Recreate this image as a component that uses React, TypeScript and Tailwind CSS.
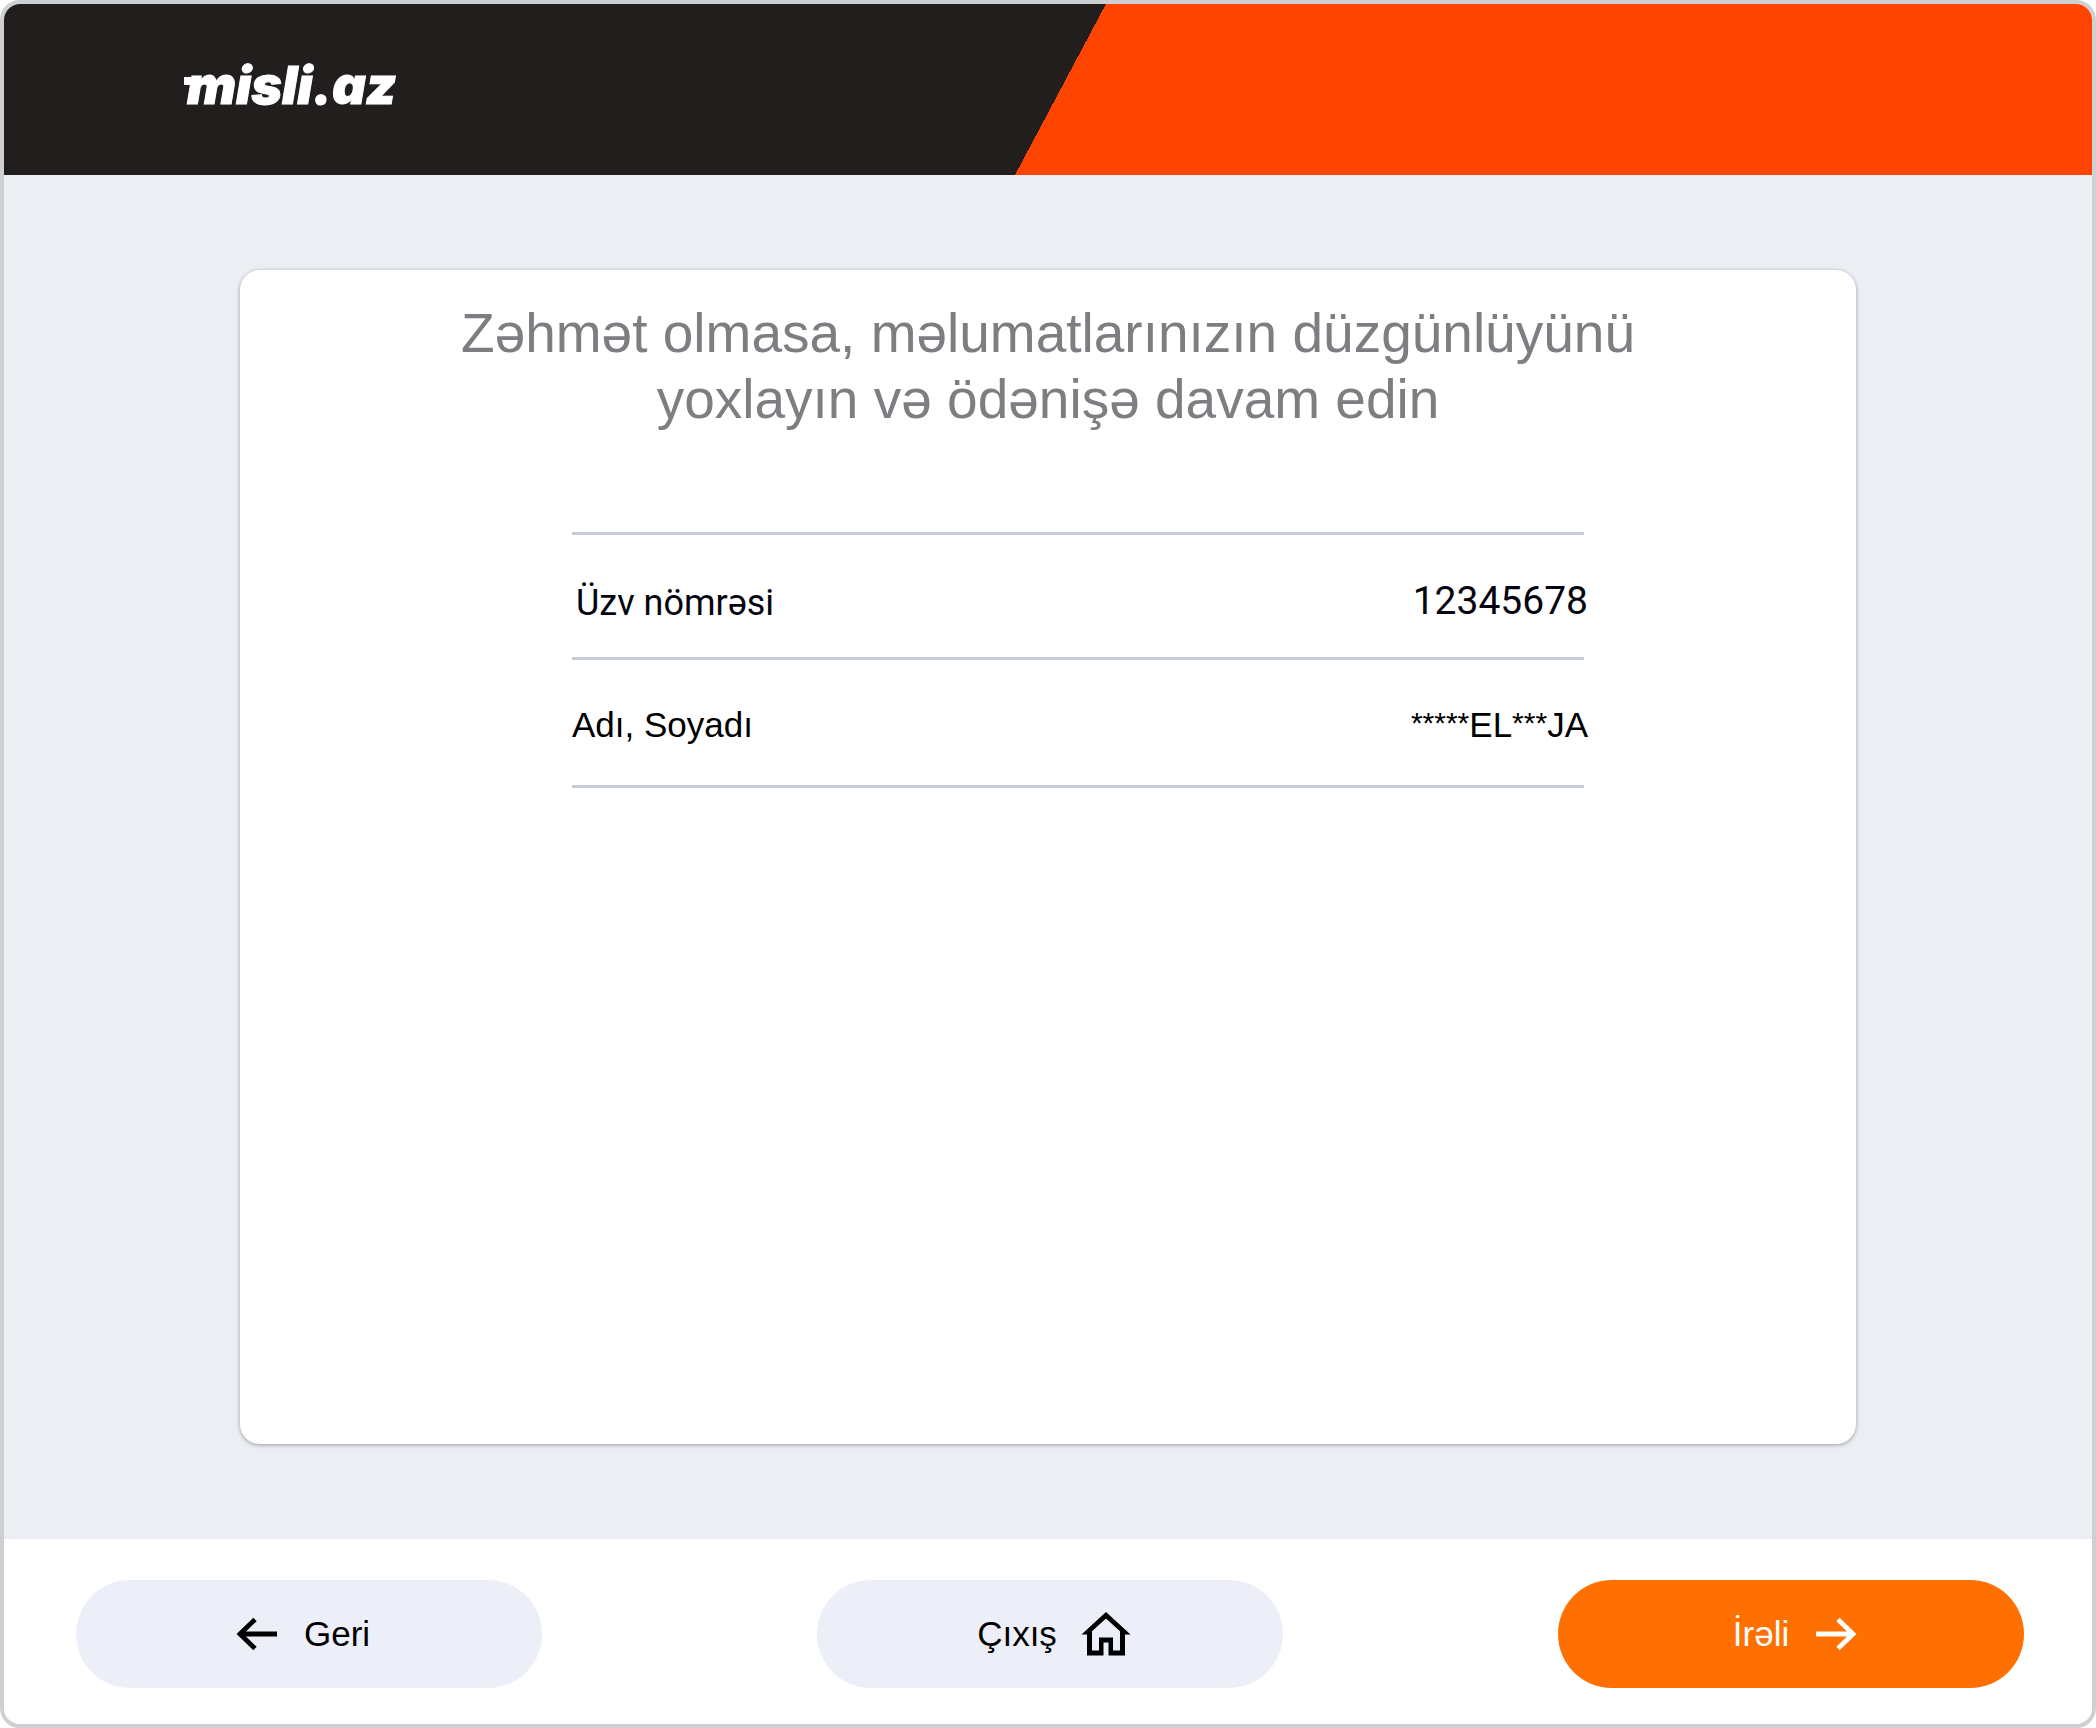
import type { ReactNode } from "react";
import { clsx } from "clsx";

function ArrowIcon({ className }: { className?: string }) {
  return (
    <svg
      width="42"
      height="34"
      viewBox="0 0 42 34"
      fill="none"
      stroke="currentColor"
      strokeWidth="4.8"
      className={className}
      aria-hidden="true"
    >
      <path d="M41 17H4" />
      <path d="M19 2.5 4 17l15 14.5" />
    </svg>
  );
}

function HomeIcon() {
  return (
    <svg width="50" height="44" viewBox="0 0 50 44" fill="currentColor" aria-hidden="true">
      <path
        fillRule="evenodd"
        d="M25 0 0.5 22.5H6V43.5H22.5V30.5H27.5V43.5H44V22.5H49.5L25 0ZM25 6.5 39 19.2V38.5H32V25.5H18V38.5H11V19.2L25 6.5Z"
      />
    </svg>
  );
}

function Logo() {
  return (
    <a
      href="#"
      className="relative font-[Inter,sans-serif] text-[52px] leading-[60px] font-black text-white italic [-webkit-text-stroke:1px_white] [font-feature-settings:'cv11']"
    >
      {/* Serif on the first letter */}
      <span className="absolute top-[21px] -left-[3px] h-2 w-4 bg-white" />
      misli.az
    </a>
  );
}

// Masked characters are set smaller than the visible letters
function MaskedName({ value }: { value: string }) {
  return value.split(/(\*+)/).map((part, i) =>
    part.startsWith("*") ? (
      <span key={i} className="align-[4px] text-[30px] leading-none">
        {part}
      </span>
    ) : (
      part
    )
  );
}

type FooterButtonProps = {
  primary?: boolean;
  className?: string;
  children: ReactNode;
};

function FooterButton({ primary, className, children }: FooterButtonProps) {
  return (
    <button
      type="button"
      className={clsx(
        "flex h-[108px] w-[466px] items-center justify-center rounded-full text-[35px] leading-[42px]",
        primary ? "bg-[#ff7000] text-white" : "bg-[#edeff8] text-black",
        className
      )}
    >
      {children}
    </button>
  );
}

export default function App() {
  return (
    <div className="min-h-screen bg-white font-['Liberation_Sans',Arial,sans-serif]">
      <div className="flex min-h-screen flex-col overflow-hidden rounded-[20px] border-4 border-[#cfd0d4] bg-white">
        {/* Header */}
        <header className="flex h-[171px] items-center bg-[linear-gradient(118deg,#221e1d_calc(50%+11px),#ff4300_calc(50%+11px))] pb-2 pl-[183px]">
          <Logo />
        </header>

        {/* Content */}
        <main className="flex flex-1 flex-col bg-[#ebeef3] px-[236px] pt-[95px] pb-[95px]">
          <section className="flex-1 rounded-[20px] bg-white pt-[30px] shadow-[0_1px_4px_rgba(0,0,0,0.35)]">
            <h1 className="mx-auto max-w-[1240px] text-center text-[55px] leading-[66px] text-[#7d7e82]">
              Zəhmət olmasa, məlumatlarınızın düzgünlüyünü yoxlayın və ödənişə davam edin
            </h1>

            <dl className="mt-[100px] mr-[272px] ml-[332px] border-t-3 border-[#c8cbd9]">
              <div className="flex h-[125px] items-center justify-between border-b-3 border-[#c8cbd9] pt-[10px] font-[Roboto,sans-serif] text-[#05050f]">
                <dt className="pt-1 pl-1 text-[36px]">Üzv nömrəsi</dt>
                <dd className="-mr-1 text-[39px]">12345678</dd>
              </div>
              <div className="flex h-[128px] items-center justify-between border-b-3 border-[#c8cbd9] pt-[6px] text-[35px] text-black">
                <dt>Adı, Soyadı</dt>
                <dd className="-mr-1">
                  <MaskedName value="*****EL***JA" />
                </dd>
              </div>
            </dl>
          </section>
        </main>

        {/* Navigation */}
        <footer className="flex items-center justify-between bg-white pt-[41px] pr-[68px] pb-9 pl-[72px]">
          <FooterButton className="pr-3">
            <ArrowIcon className="mr-[26px]" />
            Geri
          </FooterButton>
          <FooterButton className="pl-2">
            <span className="mr-6">Çıxış</span>
            <HomeIcon />
          </FooterButton>
          <FooterButton primary className="pl-2">
            İrəli
            <ArrowIcon className="ml-[26px] rotate-180" />
          </FooterButton>
        </footer>
      </div>
    </div>
  );
}
